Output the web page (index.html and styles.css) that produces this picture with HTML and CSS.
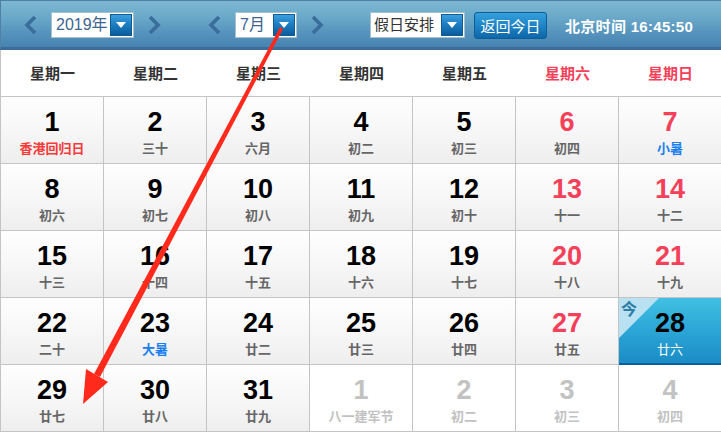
FILE: index.html
```html
<!DOCTYPE html>
<html lang="zh-CN">
<head>
<meta charset="utf-8">
<title>万年历</title>
<link rel="stylesheet" href="styles.css">
</head>
<body>
<div class="page">
  <div class="header">
    <div class="group">
      <svg class="chev" viewBox="0 0 14 20"><polyline points="11,2 3,10 11,18"/></svg>
      <div class="select year"><span class="val">2019年</span><span class="drop"><svg viewBox="0 0 12 8"><polygon points="1,1 11,1 6,7"/></svg></span></div>
      <svg class="chev" viewBox="0 0 14 20"><polyline points="3,2 11,10 3,18"/></svg>
    </div>
    <div class="group month-group">
      <svg class="chev" viewBox="0 0 14 20"><polyline points="11,2 3,10 11,18"/></svg>
      <div class="select month"><span class="val">7月</span><span class="drop"><svg viewBox="0 0 12 8"><polygon points="1,1 11,1 6,7"/></svg></span></div>
      <svg class="chev" viewBox="0 0 14 20"><polyline points="3,2 11,10 3,18"/></svg>
    </div>
    <div class="select holiday"><span class="val dark">假日安排</span><span class="drop"><svg viewBox="0 0 12 8"><polygon points="1,1 11,1 6,7"/></svg></span></div>
    <div class="today-btn">返回今日</div>
    <div class="clock">北京时间 16:45:50</div>
  </div>

  <div class="grid">
    <div class="wd">星期一</div><div class="wd">星期二</div><div class="wd">星期三</div><div class="wd">星期四</div><div class="wd">星期五</div><div class="wd we">星期六</div><div class="wd we">星期日</div>

    <div class="cell"><div class="num">1</div><div class="lunar fest">香港回归日</div></div>
    <div class="cell"><div class="num">2</div><div class="lunar">三十</div></div>
    <div class="cell"><div class="num">3</div><div class="lunar">六月</div></div>
    <div class="cell"><div class="num">4</div><div class="lunar">初二</div></div>
    <div class="cell"><div class="num">5</div><div class="lunar">初三</div></div>
    <div class="cell"><div class="num red">6</div><div class="lunar">初四</div></div>
    <div class="cell"><div class="num red">7</div><div class="lunar term">小暑</div></div>

    <div class="cell"><div class="num">8</div><div class="lunar">初六</div></div>
    <div class="cell"><div class="num">9</div><div class="lunar">初七</div></div>
    <div class="cell"><div class="num">10</div><div class="lunar">初八</div></div>
    <div class="cell"><div class="num">11</div><div class="lunar">初九</div></div>
    <div class="cell"><div class="num">12</div><div class="lunar">初十</div></div>
    <div class="cell"><div class="num red">13</div><div class="lunar">十一</div></div>
    <div class="cell"><div class="num red">14</div><div class="lunar">十二</div></div>

    <div class="cell"><div class="num">15</div><div class="lunar">十三</div></div>
    <div class="cell"><div class="num">16</div><div class="lunar">十四</div></div>
    <div class="cell"><div class="num">17</div><div class="lunar">十五</div></div>
    <div class="cell"><div class="num">18</div><div class="lunar">十六</div></div>
    <div class="cell"><div class="num">19</div><div class="lunar">十七</div></div>
    <div class="cell"><div class="num red">20</div><div class="lunar">十八</div></div>
    <div class="cell"><div class="num red">21</div><div class="lunar">十九</div></div>

    <div class="cell"><div class="num">22</div><div class="lunar">二十</div></div>
    <div class="cell"><div class="num">23</div><div class="lunar term">大暑</div></div>
    <div class="cell"><div class="num">24</div><div class="lunar">廿二</div></div>
    <div class="cell"><div class="num">25</div><div class="lunar">廿三</div></div>
    <div class="cell"><div class="num">26</div><div class="lunar">廿四</div></div>
    <div class="cell"><div class="num red">27</div><div class="lunar">廿五</div></div>
    <div class="cell today"><span class="jin">今</span><div class="num">28</div><div class="lunar">廿六</div></div>

    <div class="cell"><div class="num">29</div><div class="lunar">廿七</div></div>
    <div class="cell"><div class="num">30</div><div class="lunar">廿八</div></div>
    <div class="cell"><div class="num">31</div><div class="lunar">廿九</div></div>
    <div class="cell other"><div class="num">1</div><div class="lunar">八一建军节</div></div>
    <div class="cell other"><div class="num">2</div><div class="lunar">初二</div></div>
    <div class="cell other"><div class="num">3</div><div class="lunar">初三</div></div>
    <div class="cell other"><div class="num">4</div><div class="lunar">初四</div></div>
  </div>

  <svg class="pointer" viewBox="0 0 721 435" width="721" height="435">
    <polygon class="shaft" points="280,27 283,29 100,377 94,374"/>
    <polygon class="head" points="83,404 108,382 86,369"/>
  </svg>
</div>
</body>
</html>
```

FILE: styles.css
```css
html, body {
  margin: 0;
  padding: 0;
  background: #ffffff;
}
body {
  font-family: "Liberation Sans", "Noto Sans CJK SC", sans-serif;
  width: 721px;
  height: 435px;
  overflow: hidden;
}
.page {
  position: relative;
  width: 721px;
  height: 435px;
  overflow: hidden;
}

/* header */
.header {
  box-sizing: border-box;
  height: 50px;
  border-top: 1px solid #4f81a8;
  border-left: 1px solid #4f81a8;
  border-bottom: 3px solid #3a6e98;
  background: linear-gradient(to bottom, #7db8d2 0%, #6aa9c9 35%, #5593bc 70%, #4783b1 100%);
  display: flex;
  align-items: center;
  padding: 2px 0 0 23px;
}
.group {
  display: flex;
  align-items: center;
  gap: 13px;
}
.month-group {
  margin-left: 47px;
}
.chev {
  width: 14px;
  height: 20px;
  flex: none;
}
.chev polyline {
  fill: none;
  stroke: #3a6d9c;
  stroke-width: 3.6;
  stroke-linejoin: miter;
}
.select {
  box-sizing: border-box;
  height: 26px;
  background: #ffffff;
  border: 1px solid #a9bfd2;
  display: flex;
  align-items: stretch;
  padding: 1px;
}
.select.year { width: 83px; }
.select.month { width: 62px; }
.select.holiday { width: 95px; margin-left: 46px; }
.val {
  flex: 1;
  font-size: 16px;
  line-height: 22px;
  padding-left: 3px;
  color: #3b6593;
  font-family: "Liberation Sans", "Noto Sans CJK SC", sans-serif;
}
.val.dark { color: #333333; padding-left: 2px; font-size: 15px; }
.drop {
  width: 22px;
  flex: none;
  background: linear-gradient(to bottom, #3d9fdc 0%, #1a7cc0 50%, #0b5c9c 100%);
  border: 1px solid #0e5c96;
  box-sizing: border-box;
  display: flex;
  align-items: center;
  justify-content: center;
}
.drop svg {
  width: 12px;
  height: 8px;
}
.drop polygon { fill: #ffffff; }

.today-btn {
  box-sizing: border-box;
  margin-left: 9px;
  width: 73px;
  height: 27px;
  border: 1px solid #0c5d98;
  border-radius: 3px;
  background: linear-gradient(to bottom, #34a0dc 0%, #1f84c6 50%, #0e67a8 100%);
  color: #ffffff;
  font-size: 15px;
  line-height: 25px;
  text-align: center;
  font-family: "Noto Sans CJK SC", sans-serif;
}
.clock {
  margin-left: 18px;
  color: #ffffff;
  font-weight: bold;
  font-size: 15px;
  letter-spacing: 0.3px;
  font-family: "Liberation Sans", "Noto Sans CJK SC", sans-serif;
}

/* calendar grid */
.grid {
  display: grid;
  grid-template-columns: repeat(7, 103px);
  grid-template-rows: 47px repeat(5, 67px);
  border-left: 1px solid #c4c4c4;
  width: 722px;
}
.wd {
  box-sizing: border-box;
  border-bottom: 1px solid #c4c4c4;
  background: #ffffff;
  display: flex;
  align-items: center;
  justify-content: center;
  font-size: 15px;
  font-weight: bold;
  color: #333333;
  font-family: "Noto Sans CJK SC", sans-serif;
  padding-bottom: 1px;
}
.wd.we { color: #f5405a; }

.cell {
  position: relative;
  box-sizing: border-box;
  border-right: 1px solid #c4c4c4;
  border-bottom: 1px solid #c4c4c4;
  background: linear-gradient(to bottom, #fefefe 0%, #f7f7f7 50%, #eeeeee 100%);
  display: flex;
  flex-direction: column;
  align-items: center;
  padding-top: 11px;
}
.num {
  font-size: 27px;
  line-height: 28px;
  font-weight: bold;
  color: #000000;
  font-family: "Liberation Sans", sans-serif;
}
.num.red { color: #f5405a; }
.lunar {
  margin-top: 4px;
  font-size: 13px;
  line-height: 16px;
  font-weight: bold;
  color: #666666;
  font-family: "Noto Sans CJK SC", sans-serif;
}
.lunar.fest { color: #f53a3a; }
.lunar.term { color: #1a80f0; }

.cell.other {
  background: #ffffff;
}
.cell.other .num,
.cell.other .lunar {
  color: #c2c2c2;
}

.cell.today {
  background: linear-gradient(to bottom, #40c0e2 0%, #2ea8d8 45%, #1a8cc6 100%);
  border-bottom: 2px solid #0b5f99;
}
.cell.today .lunar { color: #ffffff; font-weight: normal; }
.cell.today::before {
  content: "";
  position: absolute;
  left: 0;
  top: 0;
  width: 0;
  height: 0;
  border-top: 40px solid #b9e1f1;
  border-right: 40px solid transparent;
}
.jin {
  position: absolute;
  left: 2px;
  top: 1px;
  z-index: 1;
  font-size: 16px;
  line-height: 18px;
  color: #2e7ea6;
  font-weight: bold;
  font-family: "Noto Sans CJK SC", sans-serif;
}

/* overlay annotation arrow */
.pointer {
  position: absolute;
  left: 0;
  top: 0;
  pointer-events: none;
}
.pointer .shaft,
.pointer .head {
  fill: #ff2a1c;
}
```
